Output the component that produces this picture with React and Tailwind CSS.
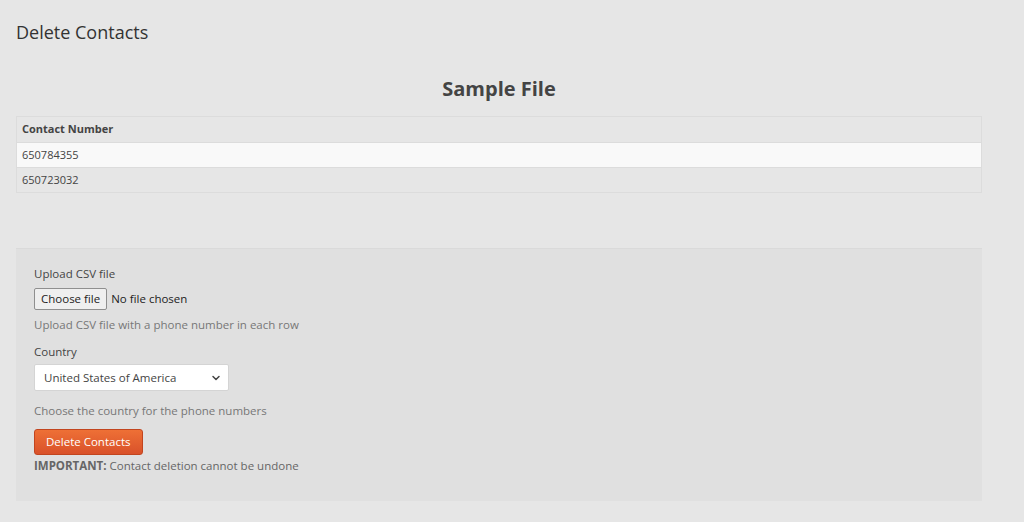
import { useState } from "react";

const numbers = ["650784355", "650723032"];

const Chevron = () => (
  <svg width="10" height="10" viewBox="0 0 10 10" fill="none" stroke="#444" strokeWidth="1.5" strokeLinecap="round" strokeLinejoin="round">
    <path d="M2 3.5 L5 6.5 L8 3.5" />
  </svg>
);

export default function App() {
  const [country, setCountry] = useState("us");

  return (
    <div className="min-h-[522px] bg-[#e6e6e6] px-4 pt-[18px] text-[#444] font-['Open_Sans',sans-serif]">
      <h1 className="text-[18px] leading-[28px] text-[#333]">Delete Contacts</h1>

      <div className="w-[966px]">
        <h2 className="mt-[29px] text-center text-[20px] font-bold leading-[28px] text-[#444]">Sample File</h2>

        <table className="mt-[13px] w-full border border-[#dcdcdc] text-[11px] text-[#444]">
          <thead>
            <tr className="bg-[#e6e6e6]">
              <th className="h-[26px] px-[5px] text-left font-bold">Contact Number</th>
            </tr>
          </thead>
          <tbody>
            {numbers.map((n, i) => (
              <tr key={n} className={i % 2 === 0 ? "bg-[#f9f9f9]" : "bg-[#e6e6e6]"}>
                <td className="h-[25px] border-t border-[#dcdcdc] px-[5px]">{n}</td>
              </tr>
            ))}
          </tbody>
        </table>

        <div className="mt-[55px] border-t border-[#dadada] bg-[#e0e0e0] px-[18px] pt-[16px] pb-[26px] text-[11.5px] leading-[18px]">
          <label className="block text-[#444]">Upload CSV file</label>
          <div className="mt-[5px] flex h-[22px] items-center gap-[4px]">
            <button className="h-[22px] rounded-[2px] border border-[#8f8f8f] bg-[#efefef] px-[6px] text-[11.5px] leading-[18px] text-[#222]">
              Choose file
            </button>
            <span className="text-[#222]">No file chosen</span>
          </div>
          <p className="mt-[6px] text-[#777]">Upload CSV file with a phone number in each row</p>

          <label className="mt-[9px] block text-[#444]">Country</label>
          <div className="relative mt-[3px] w-[195px]">
            <select
              value={country}
              onChange={(e) => setCountry(e.target.value)}
              className="block h-[27px] w-full appearance-none rounded-[2px] border border-[#d4d4d4] bg-white pl-[9px] text-[11.5px] text-[#444] outline-none"
            >
              <option value="us">United States of America</option>
              <option value="ca">Canada</option>
              <option value="uk">United Kingdom</option>
            </select>
            <span className="pointer-events-none absolute right-[8px] top-[9px]">
              <Chevron />
            </span>
          </div>
          <p className="mt-[11px] text-[#777]">Choose the country for the phone numbers</p>

          <button className="mt-[9px] block h-[26px] rounded-[3px] border border-[#c2451f] bg-gradient-to-b from-[#ee7036] to-[#d9512a] px-[11px] text-[11.5px] text-white">
            Delete Contacts
          </button>
          <p className="mt-[2px] text-[#666]">
            <strong className="font-bold">IMPORTANT:</strong> Contact deletion cannot be undone
          </p>
        </div>
      </div>
    </div>
  );
}
